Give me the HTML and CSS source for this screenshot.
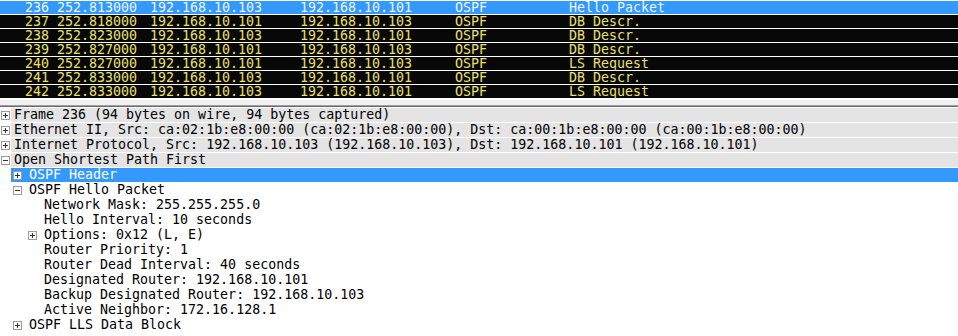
FILE: index.html
```html
<!DOCTYPE html>
<html lang="en">

<head>
    <meta charset="UTF-8">
    <meta name="viewport" content="width=device-width, initial-scale=1.0">
    <title>OSPF capture</title>
    <link rel="stylesheet" href="styles.css">
</head>

<body>
    <div class="packet-list">
        <div class="packet selected">
            <span class="col-no">236</span><span class="col-time">252.813000</span><span class="col-src">192.168.10.103</span><span class="col-dst">192.168.10.101</span><span class="col-proto">OSPF</span><span class="col-info">Hello Packet</span>
        </div>
        <div class="packet">
            <span class="col-no">237</span><span class="col-time">252.818000</span><span class="col-src">192.168.10.101</span><span class="col-dst">192.168.10.103</span><span class="col-proto">OSPF</span><span class="col-info">DB Descr.</span>
        </div>
        <div class="packet">
            <span class="col-no">238</span><span class="col-time">252.823000</span><span class="col-src">192.168.10.103</span><span class="col-dst">192.168.10.101</span><span class="col-proto">OSPF</span><span class="col-info">DB Descr.</span>
        </div>
        <div class="packet">
            <span class="col-no">239</span><span class="col-time">252.827000</span><span class="col-src">192.168.10.101</span><span class="col-dst">192.168.10.103</span><span class="col-proto">OSPF</span><span class="col-info">DB Descr.</span>
        </div>
        <div class="packet">
            <span class="col-no">240</span><span class="col-time">252.827000</span><span class="col-src">192.168.10.101</span><span class="col-dst">192.168.10.103</span><span class="col-proto">OSPF</span><span class="col-info">LS Request</span>
        </div>
        <div class="packet">
            <span class="col-no">241</span><span class="col-time">252.833000</span><span class="col-src">192.168.10.103</span><span class="col-dst">192.168.10.101</span><span class="col-proto">OSPF</span><span class="col-info">DB Descr.</span>
        </div>
        <div class="packet">
            <span class="col-no">242</span><span class="col-time">252.833000</span><span class="col-src">192.168.10.103</span><span class="col-dst">192.168.10.101</span><span class="col-proto">OSPF</span><span class="col-info">LS Request</span>
        </div>
    </div>

    <div class="splitter"></div>

    <div class="detail-tree">
        <div class="node">
            <div class="gutter"><svg class="toggle" viewBox="0 0 9 9"><rect x="0.5" y="0.5" width="8" height="8" /><path d="M2 4.5h5M4.5 2v5" /></svg></div>
            <div class="cell top">Frame 236 (94 bytes on wire, 94 bytes captured)</div>
        </div>
        <div class="node">
            <div class="gutter"><svg class="toggle" viewBox="0 0 9 9"><rect x="0.5" y="0.5" width="8" height="8" /><path d="M2 4.5h5M4.5 2v5" /></svg></div>
            <div class="cell top">Ethernet II, Src: ca:02:1b:e8:00:00 (ca:02:1b:e8:00:00), Dst: ca:00:1b:e8:00:00 (ca:00:1b:e8:00:00)</div>
        </div>
        <div class="node">
            <div class="gutter"><svg class="toggle" viewBox="0 0 9 9"><rect x="0.5" y="0.5" width="8" height="8" /><path d="M2 4.5h5M4.5 2v5" /></svg></div>
            <div class="cell top">Internet Protocol, Src: 192.168.10.103 (192.168.10.103), Dst: 192.168.10.101 (192.168.10.101)</div>
        </div>
        <div class="node">
            <div class="gutter"><svg class="toggle" viewBox="0 0 9 9"><rect x="0.5" y="0.5" width="8" height="8" /><path d="M2 4.5h5" /></svg></div>
            <div class="cell top">Open Shortest Path First</div>
        </div>
        <div class="node">
            <div class="gutter"></div>
            <div class="cell l2 selected"><span class="slot"><svg class="toggle" viewBox="0 0 9 9"><rect x="0.5" y="0.5" width="8" height="8" /><path d="M2 4.5h5M4.5 2v5" /></svg></span>OSPF Header</div>
        </div>
        <div class="node">
            <div class="gutter"></div>
            <div class="cell l2"><span class="slot"><svg class="toggle" viewBox="0 0 9 9"><rect x="0.5" y="0.5" width="8" height="8" /><path d="M2 4.5h5" /></svg></span>OSPF Hello Packet</div>
        </div>
        <div class="node">
            <div class="gutter"></div>
            <div class="cell l3"><span class="slot"></span>Network Mask: 255.255.255.0</div>
        </div>
        <div class="node">
            <div class="gutter"></div>
            <div class="cell l3"><span class="slot"></span>Hello Interval: 10 seconds</div>
        </div>
        <div class="node">
            <div class="gutter"></div>
            <div class="cell l3"><span class="slot"><svg class="toggle" viewBox="0 0 9 9"><rect x="0.5" y="0.5" width="8" height="8" /><path d="M2 4.5h5M4.5 2v5" /></svg></span>Options: 0x12 (L, E)</div>
        </div>
        <div class="node">
            <div class="gutter"></div>
            <div class="cell l3"><span class="slot"></span>Router Priority: 1</div>
        </div>
        <div class="node">
            <div class="gutter"></div>
            <div class="cell l3"><span class="slot"></span>Router Dead Interval: 40 seconds</div>
        </div>
        <div class="node">
            <div class="gutter"></div>
            <div class="cell l3"><span class="slot"></span>Designated Router: 192.168.10.101</div>
        </div>
        <div class="node">
            <div class="gutter"></div>
            <div class="cell l3"><span class="slot"></span>Backup Designated Router: 192.168.10.103</div>
        </div>
        <div class="node">
            <div class="gutter"></div>
            <div class="cell l3"><span class="slot"></span>Active Neighbor: 172.16.128.1</div>
        </div>
        <div class="node">
            <div class="gutter"></div>
            <div class="cell l2"><span class="slot"><svg class="toggle" viewBox="0 0 9 9"><rect x="0.5" y="0.5" width="8" height="8" /><path d="M2 4.5h5M4.5 2v5" /></svg></span>OSPF LLS Data Block</div>
        </div>
    </div>
</body>

</html>
```

FILE: styles.css
```css
body {
    margin: 0;
    background-color: #fff;
    font-family: "DejaVu Sans Mono", "Liberation Mono", monospace;
    font-size: 13.3px;
    overflow: hidden;
}

/* packet list */
.packet-list {
    padding-top: 1px;
}

.packet {
    display: flex;
    height: 13px;
    line-height: 13px;
    margin-bottom: 1px;
    background-color: #080808;
    color: #ebe06a;
    white-space: pre;
}

.packet.selected {
    background-color: #3399ff;
    color: #eef6ff;
}

.col-no {
    width: 49px;
    text-align: right;
}

.col-time {
    margin-left: 8px;
    width: 93px;
}

.col-src {
    width: 150px;
}

.col-dst {
    width: 155px;
}

.col-proto {
    width: 114px;
}

/* pane splitter */
.splitter {
    height: 5px;
    background-color: #f0f0f0;
    border-top: 1px solid #fff;
    border-bottom: 1px solid #a0a0a0;
    box-shadow: 0 1px 0 #6a6a6a;
    margin-bottom: 2px;
}

/* detail tree */
.node {
    display: flex;
    height: 14px;
    line-height: 14px;
    margin-bottom: 1px;
    color: #000;
    white-space: pre;
}

.gutter {
    width: 11px;
    flex-shrink: 0;
    display: flex;
    align-items: center;
    padding-left: 1px;
    box-sizing: border-box;
}

.cell {
    flex: 1;
    display: flex;
    align-items: center;
}

.cell.top {
    background-color: #e4e4e4;
    padding-left: 3px;
}

.cell.l2 {
    padding-left: 2px;
}

.cell.l3 {
    padding-left: 17px;
}

.cell.selected {
    background-color: #3399ff;
    color: #fff;
}

.slot {
    width: 16px;
    flex-shrink: 0;
    display: flex;
    align-items: center;
}

.toggle {
    width: 9px;
    height: 9px;
    display: block;
}

.toggle rect {
    fill: #fff;
    stroke: #9c9c9c;
    stroke-width: 1;
}

.toggle path {
    stroke: #333;
    stroke-width: 1;
    fill: none;
}
```
